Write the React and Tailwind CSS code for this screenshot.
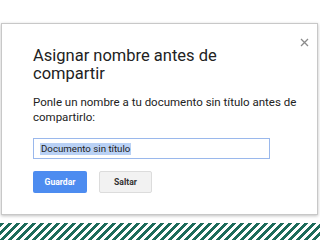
export default function App() {
  return (
    <div className="w-[320px] h-[240px] bg-white flex flex-col overflow-hidden" style={{ fontFamily: "Roboto, 'Noto Sans', sans-serif" }}>
      <div className="pt-[23px] pl-[1px] pr-[2px]">
        <div className="relative h-[192px] border border-[#c8c8c8] bg-white shadow-[0_1px_3px_rgba(0,0,0,0.25)] pl-[31px] pr-[36px] pt-[23px]">
          <svg className="absolute left-[298px] top-[14px]" width="9" height="9" viewBox="0 0 9 9">
            <path d="M1 1L8 8M8 1L1 8" stroke="#8a8a8a" strokeWidth="1.3" />
          </svg>
          <h1 className="text-[16.5px] leading-[18px] text-[#222] font-normal whitespace-nowrap">Asignar nombre antes de<br />compartir</h1>
          <p className="mt-[12px] text-[11.5px] leading-[15px] text-[#222] whitespace-nowrap">Ponle un nombre a tu documento sin título antes de<br />compartirlo:</p>
          <div className="mt-[13px] w-[237px] h-[21px] border border-[#9ab8ec] flex items-center pl-[6px]">
            <span className="bg-[#b9d1f5] text-[9.7px] leading-[12px] text-[#222] px-[1px]">Documento sin título</span>
          </div>
          <div className="mt-[12px] flex gap-[12px]">
            <div className="w-[54px] h-[22px] rounded-[2px] bg-[#4d8cf0] text-white text-[8.6px] font-bold flex items-center justify-center">Guardar</div>
            <div className="w-[53px] h-[22px] rounded-[2px] bg-[#f2f2f2] border border-[#dcdcdc] text-[#333] text-[8.6px] font-bold flex items-center justify-center">Saltar</div>
          </div>
        </div>
      </div>
      <div className="mt-[8px] h-[17px] bg-[repeating-linear-gradient(135deg,#1d6b5a_0px,#1d6b5a_3.1px,#ffffff_3.1px,#ffffff_5.66px)]"></div>
    </div>
  );
}
